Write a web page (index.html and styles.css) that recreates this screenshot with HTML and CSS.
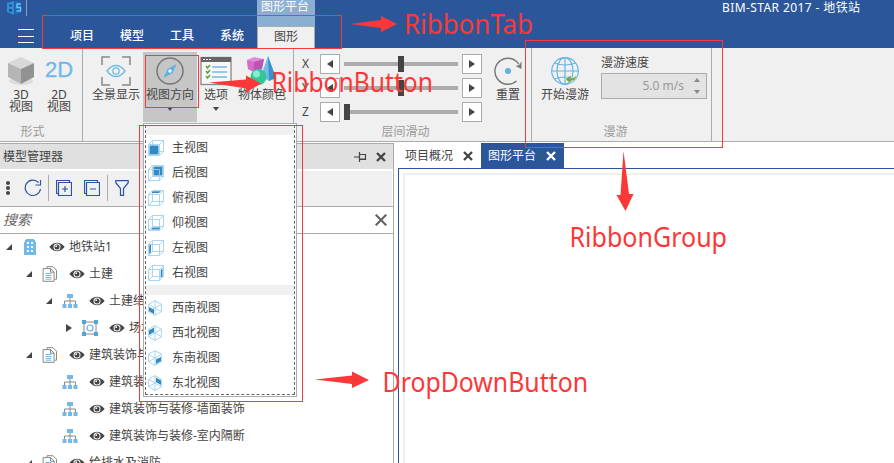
FILE: index.html
```
<!DOCTYPE html>
<html lang="zh-CN">
<head>
<meta charset="utf-8">
<title>BIM-STAR 2017</title>
<link rel="stylesheet" href="styles.css">
</head>
<body>
<svg class="defs" width="0" height="0">
  <defs>
    <symbol id="eye" viewBox="0 0 16 10"><path d="M.3 5Q4 .8 8 .8T15.700 5Q12 9.200 8 9.200T.3 5Z" fill="#444"/><circle cx="8" cy="5" r="3.500" fill="#fff"/><circle cx="8" cy="5" r="2.500" fill="#444"/><circle cx="7.200" cy="4.200" r=".9" fill="#fff"/></symbol>
    <symbol id="org" viewBox="0 0 16 14"><path d="M8 4v6M2.500 10V7h11v3" fill="none" stroke="#888"/><path d="M5 0h6v4H5zM.5 10h4v4h-4zM6 10h4v4H6zM11.500 10h4v4h-4z" fill="#74b9e6"/></symbol>
    <symbol id="docs" viewBox="0 0 15 16"><path d="M4.500 2.500V.7h6l3.500 3.500v9h-2" fill="none" stroke="#888"/><path d="M.6 2.600h7.500l3.500 3.500v9.200H.6zM8 2.600v3.600h3.600" fill="#fff" stroke="#888"/><path d="M3 7.500h6M3 9.500h6M3 11.500h6M3 13.200h6" stroke="#74b9e6"/></symbol>
    <symbol id="cube" viewBox="0 0 16 16"><path d="M.5 4.500h11v11H.5zM4.500.5h11v11h-11zM.5 4.500l4-4M11.500 4.500l4-4M.5 15.500l4-4M11.500 15.500l4-4" fill="none" stroke="#a9d6f0"/></symbol>
    <symbol id="iso" viewBox="0 0 14 16"><path d="M7 .6l6.400 3.700v7.400L7 15.400.6 11.700V4.300zM7 .6v14.800M.6 4.300l12.800 7.400M13.400 4.300L.6 11.700" fill="none" stroke="#a9d6f0"/></symbol>
    <symbol id="close" viewBox="0 0 10 10"><path d="M1 1l8 8M9 1L1 9" fill="none" stroke="currentColor" stroke-width="2.300"/></symbol>
  </defs>
</svg>

<div class="app">
  <header class="titlebar">
    <div class="caption">
      <svg class="logo" width="16" height="16" viewBox="0 0 16 16"><path d="M0 3l7-2v14l-7-3z" fill="#2f8fd6"/><path d="M8 1l6 1v11l-6 2z" fill="#1b6fb8"/><path d="M2 4.500h3v2H2zM2 9h3v2.500H2z" fill="#1c4f94"/><path d="M14 4h-4v3.500h3.500V11H9.500" fill="none" stroke="#6cc0f2" stroke-width="1.500"/></svg>
      <span class="caption-line"></span>
      <span class="context">图形平台</span>
      <span class="title">BIM-STAR 2017 - 地铁站</span>
    </div>
    <nav class="tabs">
      <span class="menu"><i></i><i></i><i></i></span>
      <span class="tab">项目</span><span class="tab">模型</span><span class="tab">工具</span><span class="tab">系统</span>
      <span class="tab active">图形</span>
    </nav>
  </header>

  <section class="ribbon">
    <div class="group g-form">
      <div class="body">
        <button class="big"><svg width="30" height="30" viewBox="0 0 30 30"><ellipse cx="15" cy="25" rx="12" ry="4" fill="#ddd"/><path d="M15 1l13 6-13 6L2 7z" fill="#d8d8d8"/><path d="M2 7l13 6v15L2 21z" fill="#b5b5b5"/><path d="M28 7l-13 6v15l13-7z" fill="#929292"/></svg><span>3D<br>视图</span></button>
        <button class="big"><b class="two-d">2D</b><span>2D<br>视图</span></button>
      </div>
      <div class="label">形式</div>
    </div>
    <div class="group g-view">
      <div class="body">
        <button class="big w-pan"><svg width="30" height="30" viewBox="0 0 30 30" fill="none"><path d="M1 9V1h8M21 1h8v8M29 21v8h-8M9 29H1v-8" stroke="#888" stroke-width="1.500"/><path d="M6 15Q10 9.500 15 9.500T24 15Q20 20.500 15 20.500T6 15Z" stroke="#74b9e6" stroke-width="1.300"/><circle cx="15" cy="15" r="3.200" stroke="#74b9e6" stroke-width="1.300"/></svg><span>全景显示</span></button>
        <button class="big pressed"><svg width="30" height="30" viewBox="0 0 30 30"><circle cx="15" cy="15" r="13" fill="none" stroke="#777" stroke-width="1.500"/><path d="M21.500 8l-4 9-9 5 4-9z" fill="#5fb0e3"/><circle cx="15" cy="15" r="1.700" fill="#fff"/></svg><span>视图方向</span><i class="drop"></i></button>
        <button class="big w-opt"><svg width="32" height="30" viewBox="0 0 32 30"><rect x="1" y="1.500" width="30" height="27" fill="#f7f7f7" stroke="#888" stroke-width="1.300"/><path d="M1 1h30v5H1z" fill="#666"/><path d="M3 3.500h2M6 3.500h2M9 3.500h2" stroke="#eee"/><path d="M12 11h15M12 16h15M12 21h15" stroke="#74b9e6" stroke-width="1.300"/><path d="M6 10l1.500 2L10 9M6 15l1.500 2 2.500-3M6 20l1.500 2 2.500-3" fill="none" stroke="#5aa344" stroke-width="1.500"/></svg><span>选项</span><i class="drop"></i></button>
        <button class="big w-col"><svg width="30" height="30" viewBox="0 0 30 30"><path d="M21 0l8 22-7 3-8-5z" fill="#70bcea"/><path d="M21 0l8 22-7 3z" fill="#3993c9"/><path d="M0 4l7-3 10 2-2 10-8 3-6-3z" fill="#e08bd8"/><path d="M0 4l7 2v10l-6-3z" fill="#d46cc9"/><path d="M7 6l10-3-2 10-8 3z" fill="#bb55b4"/><circle cx="11.500" cy="21" r="8" fill="#34c696"/><circle cx="9.500" cy="18" r="3.500" fill="#8cebca"/></svg><span>物体颜色</span></button>
      </div>
    </div>
    <div class="group g-slide">
      <div class="body">
        <div class="sliders">
          <span>X</span><button class="step"><i class="left"></i></button><div class="track"><i class="thumb mid"></i></div><button class="step"><i class="right"></i></button>
          <span>Y</span><button class="step"><i class="left"></i></button><div class="track"><i class="thumb mid"></i></div><button class="step"><i class="right"></i></button>
          <span>Z</span><button class="step"><i class="left"></i></button><div class="track"><i class="thumb"></i></div><button class="step"><i class="right"></i></button>
        </div>
        <button class="big w-reset"><svg width="30" height="30" viewBox="0 0 30 30"><path d="M23.500 25A13 13 0 1 1 26 8.500" fill="none" stroke="#777" stroke-width="1.400"/><path d="M28.500 5v8l-6-3 4-1z" fill="#777"/><circle cx="15" cy="15" r="3" fill="#5fb0e3"/></svg><span>重置</span></button>
      </div>
      <div class="label">层间滑动</div>
    </div>
    <div class="group g-roam">
      <div class="body">
        <button class="big w-roam"><svg width="30" height="30" viewBox="0 0 30 30"><g fill="none" stroke="#64b4e6" stroke-width="1.200"><circle cx="15" cy="15" r="13.300"/><ellipse cx="15" cy="15" rx="8" ry="13.300"/><path d="M15 1.700v26.600M1.700 15h26.600M4.500 7Q15 11 25.500 7M4.500 23Q15 19 25.500 23"/></g><path d="M26 19q1 6-5 6v3l-6-5 6-4v3q4 0 5-3z" fill="#6da84e" stroke="#f0f0f0" stroke-width=".6"/></svg><span>开始漫游</span></button>
        <div class="speed"><span>漫游速度</span><div class="spin"><span>5.0 m/s</span><span class="arrows"><i class="up"></i><i class="down"></i></span></div></div>
      </div>
      <div class="label">漫游</div>
    </div>
  </section>

  <main class="work">
    <aside class="panel">
      <div class="panel-head"><span>模型管理器</span><svg width="13" height="10" viewBox="0 0 13 10" fill="none" stroke="#444"><path d="M0 5h5M5.500 0v10M5 2.500h6.500v5H5M5 7h7" stroke-width="1.200"/></svg><svg class="x" width="10" height="10"><use href="#close"/></svg></div>
      <div class="tools">
        <span class="dots"><i></i><i></i><i></i></span>
        <svg class="refresh" width="18" height="18" viewBox="0 0 18 18" fill="none" stroke="#2b579a" stroke-width="1.200"><path d="M16.500 10A7.700 7.700 0 1 1 14.500 3.500M16.500 1v5h-5"/></svg>
        <i class="rule"></i>
        <svg class="expand" width="16" height="16" viewBox="0 0 16 16" fill="none" stroke="#2b579a"><path d="M2.500 2.500h13v13h-13zM2.500 13.500h-2V.5h13v2M6 9h6M9 6v6" stroke-width="1.200"/></svg>
        <svg class="collapse" width="16" height="16" viewBox="0 0 16 16" fill="none" stroke="#2b579a"><path d="M2.500 2.500h13v13h-13zM2.500 13.500h-2V.5h13v2M6 9h6" stroke-width="1.200"/></svg>
        <i class="rule second"></i>
        <svg class="filter" width="14" height="16" viewBox="0 0 14 16" fill="none" stroke="#2b579a"><path d="M.8.700h12.400v2L8.500 8.500v6.800h-3V8.500L.8 2.700z" stroke-width="1.200"/></svg>
      </div>
      <div class="search"><span>搜索</span><svg width="12" height="12" viewBox="0 0 12 12"><path d="M.7.700l10.600 10.600M11.300.7L.7 11.300" stroke="#666" stroke-width="2.200"/></svg></div>
      <div class="tree">
        <div class="row"><i class="twist open"></i><svg class="ico" width="14" height="16" viewBox="0 0 14 16"><path d="M3 0h8v1h1v2h1v13H1V3h1V1h1z" fill="#74b9e6"/><path d="M4 3h2v2H4zM8 3h2v2H8zM4 7h2v2H4zM8 7h2v2H8zM4 11h2v2H4zM8 11h2v2H8z" fill="#fff"/></svg><svg class="eye"><use href="#eye"/></svg><span>地铁站1</span></div>
        <div class="row l1"><i class="twist open"></i><svg class="ico" width="15" height="16"><use href="#docs"/></svg><svg class="eye"><use href="#eye"/></svg><span>土建</span></div>
        <div class="row l2"><i class="twist open"></i><svg class="ico" width="16" height="14"><use href="#org"/></svg><svg class="eye"><use href="#eye"/></svg><span>土建结</span></div>
        <div class="row l3"><i class="twist shut"></i><svg class="ico" width="16" height="16" viewBox="0 0 16 16"><path d="M2 2h12v12H2z" fill="none" stroke="#888"/><circle cx="8" cy="8" r="3" fill="none" stroke="#64b4e6" stroke-width="1.200"/><path d="M0 0h4v4H0zM12 0h4v4h-4zM0 12h4v4H0zM12 12h4v4h-4z" fill="#4fa5da"/></svg><svg class="eye"><use href="#eye"/></svg><span>场地</span></div>
        <div class="row l1"><i class="twist open"></i><svg class="ico" width="15" height="16"><use href="#docs"/></svg><svg class="eye"><use href="#eye"/></svg><span>建筑装饰与</span></div>
        <div class="row l2"><i class="twist"></i><svg class="ico" width="16" height="14"><use href="#org"/></svg><svg class="eye"><use href="#eye"/></svg><span>建筑装</span></div>
        <div class="row l2"><i class="twist"></i><svg class="ico" width="16" height="14"><use href="#org"/></svg><svg class="eye"><use href="#eye"/></svg><span>建筑装饰与装修-墙面装饰</span></div>
        <div class="row l2"><i class="twist"></i><svg class="ico" width="16" height="14"><use href="#org"/></svg><svg class="eye"><use href="#eye"/></svg><span>建筑装饰与装修-室内隔断</span></div>
        <div class="row l1"><i class="twist open"></i><svg class="ico" width="15" height="16"><use href="#docs"/></svg><svg class="eye"><use href="#eye"/></svg><span>给排水及消防</span></div>
      </div>
    </aside>
    <section class="documents">
      <div class="doc-tabs"><span class="doc">项目概况<svg width="10" height="10"><use href="#close"/></svg></span><span class="doc current">图形平台<svg width="10" height="10"><use href="#close"/></svg></span></div>
      <div class="canvas"><div class="viewport"></div></div>
    </section>
  </main>
</div>

<div class="dropdown">
  <div class="dropdown-inner">
    <div class="band"></div>
    <div class="item"><svg width="16" height="16"><use href="#cube"/><path d="M1.500 5.500h9v9h-9z" fill="#3389c4"/></svg>主视图</div>
    <div class="item"><svg width="16" height="16"><use href="#cube"/><path d="M5.500 1.500h9v9h-9z" fill="#3389c4"/><path d="M5 4.500h6.500V11" fill="none" stroke="#8dc5e8"/></svg>后视图</div>
    <div class="item"><svg width="16" height="16"><use href="#cube"/><path d="M5 1.200h8L11 3H3.500z" fill="#3389c4"/></svg>俯视图</div>
    <div class="item"><svg width="16" height="16"><use href="#cube"/><path d="M4.500 12.500h8L11 14.500H3z" fill="#3389c4"/></svg>仰视图</div>
    <div class="item"><svg width="16" height="16"><use href="#cube"/><path d="M1.200 5.500L3 4v8l-1.800 2z" fill="#3389c4"/></svg>左视图</div>
    <div class="item"><svg width="16" height="16"><use href="#cube"/><path d="M12.700 5L14.500 3v8l-1.800 2z" fill="#3389c4"/></svg>右视图</div>
    <div class="band"></div>
    <div class="item"><svg width="14" height="16"><use href="#iso"/><path d="M1 7l5 2.500V14L1 11z" fill="#3389c4"/></svg>西南视图</div>
    <div class="item"><svg width="14" height="16"><use href="#iso"/><path d="M1 5.500L6 2.500v4.500L1 10z" fill="#3389c4"/></svg>西北视图</div>
    <div class="item"><svg width="14" height="16"><use href="#iso"/><path d="M8 9.500L13 7v4l-5 3z" fill="#3389c4"/></svg>东南视图</div>
    <div class="item"><svg width="14" height="16"><use href="#iso"/><path d="M8 2.500l5 3V10L8 7z" fill="#3389c4"/></svg>东北视图</div>
  </div>
</div>

<svg class="notes" width="894" height="463" viewBox="0 0 894 463">
  <g fill="none" stroke="#fb3838">
    <rect x="42.500" y="15.500" width="299" height="33"/>
    <rect x="145.500" y="55.500" width="53" height="52"/>
    <rect x="139.500" y="125.500" width="163" height="276"/>
    <rect x="525.500" y="40.500" width="197" height="107"/>
  </g>
  <g fill="#fb3838">
    <path d="M350 24l31-4v-4l16 8-16 8v-4z"/>
    <path d="M209 82.500l37-3v-4l15 8-15 9v-4z"/>
    <path d="M315 379.500l37-4v-4l17 8.500-17 8v-4z"/>
    <path d="M623.500 151l-3 44h-4l9 16 8-17h-4.500z"/>
    <text x="404" y="34" textLength="129" lengthAdjust="spacingAndGlyphs">RibbonTab</text>
    <text x="271.500" y="92" textLength="161.500" lengthAdjust="spacingAndGlyphs">RibbonButton</text>
    <text x="569.500" y="247" textLength="157.500" lengthAdjust="spacingAndGlyphs">RibbonGroup</text>
    <text x="382.500" y="392" textLength="205.500" lengthAdjust="spacingAndGlyphs">DropDownButton</text>
  </g>
</svg>
</body>
</html>
```
FILE: styles.css
```
* { box-sizing: border-box; }
body { margin: 0; width: 894px; height: 463px; overflow: hidden; position: relative; background: #fff; color: #444; font: 12px/16px "Noto Sans", "Noto Sans CJK SC", sans-serif; }
button { margin: 0; padding: 0; border: 0; background: none; color: inherit; font: inherit; }
svg { display: block; flex: none; }
i { display: block; flex: none; }
span { white-space: nowrap; }
.defs { display: none; }
.app { height: 463px; display: flex; flex-direction: column; overflow: hidden; }

.titlebar { height: 48px; background: #2b579a; color: #fff; flex: none; }
.caption { height: 26px; display: flex; align-items: flex-start; }
.logo { margin-left: 7px; }
.caption-line { width: 1px; height: 16px; margin-left: 3px; background: #8c9fbe; }
.context { width: 58px; height: 26px; margin-left: 230px; padding-left: 4px; background: #8baed3; line-height: 14px; }
.title { margin-left: 407px; letter-spacing: .4px; }
.tabs { height: 22px; display: flex; }
.menu { width: 16px; height: 14px; margin: 3px 27px 0 18px; display: flex; flex-direction: column; justify-content: space-between; }
.menu i { height: 1px; background: #fff; }
.tab { width: 50px; padding-left: 9px; line-height: 20px; font-weight: 500; }
.tab.active { width: 58px; margin-left: -4px; padding-left: 16px; background: #f0f0f0; color: #444; border: 1px solid #ababab; border-bottom: 0; font-weight: 400; }

.ribbon { height: 94px; display: flex; background: #f0f0f0; border-bottom: 1px solid #ababab; flex: none; }
.group { height: 93px; display: flex; flex-direction: column; border-right: 1px solid #ababab; flex: none; }
.body { height: 76px; display: flex; }
.label { text-align: center; color: #999; line-height: 15px; }
.g-form { width: 83px; }
.g-form .body { padding-left: 2px; }
.g-form .label { padding-right: 17px; }
.g-view { width: 211px; }
.g-slide { width: 238px; }
.g-slide .label { padding-right: 14px; }
.g-roam { width: 180px; }
.g-roam .label { padding-right: 12px; }
.big { width: 38px; height: 70px; margin-top: 4px; padding-top: 4px; display: flex; flex-direction: column; align-items: center; flex: none; }
.big span { margin-top: 1px; }
.g-form .big span { line-height: 12px; margin-top: 3px; }
.two-d { height: 30px; color: #74b9e6; font: 22px/28px "Liberation Sans", sans-serif; -webkit-text-stroke: .4px #74b9e6; }
.w-pan { width: 54px; margin: 4px 0 0 6px; }
.pressed { width: 54px; background: #c6c6c6; }
.w-opt { width: 36px; margin-left: 1px; }
.w-col { width: 54px; margin-left: 1px; }
.drop { margin-top: 4px; border: 3px solid transparent; border-top: 4px solid #444; border-bottom: 0; }
.sliders { width: 180px; height: 68px; margin: 6px 0 0 8px; display: grid; grid-template: repeat(3, 20px) / 18px 24px 114px 24px; row-gap: 4px; align-items: center; }
.sliders > span { line-height: 20px; }
.step { width: 20px; height: 20px; background: #fff; border: 1px solid #ababab; display: flex; align-items: center; justify-content: center; }
.left { border: 4px solid transparent; border-right: 6px solid #444; border-left: 0; }
.right { border: 4px solid transparent; border-left: 6px solid #444; border-right: 0; }
.track { height: 4px; background: #ababab; display: flex; align-items: center; }
.track + .step { justify-self: end; }
.thumb { width: 6px; height: 16px; background: #444; }
.thumb.mid { margin-left: 54px; }
.w-reset { width: 36px; margin-left: 8px; }
.w-roam { width: 54px; margin-left: 6px; }
.speed { margin: 6px 0 0 9px; }
.speed > span { display: block; line-height: 17px; }
.spin { width: 106px; height: 26px; margin-top: 2px; border: 1px solid #ababab; background: #e3e3e3; color: #999; display: flex; align-items: center; justify-content: flex-end; }
.arrows { width: 12px; margin: 0 0 0 10px; display: flex; flex-direction: column; gap: 8px; }
.up, .down { width: 6px; border: 3px solid transparent; }
.up { border-top: 0; border-bottom: 4px solid #888; }
.down { border-bottom: 0; border-top: 4px solid #888; }

.work { flex: 1; min-height: 0; display: flex; padding-top: 1px; }
.panel { width: 394px; border: solid #ababab; border-width: 1px 1px 0 0; flex: none; }
.panel-head { height: 25px; padding: 0 7px 0 3px; display: flex; align-items: center; background: #e0e0e0; }
.panel-head > span { flex: 1; }
.panel-head .x { margin-left: 9px; }
.tools { height: 35px; margin: 2px 1px 0 0; padding-bottom: 2px; background: #f0f0f0; display: flex; align-items: center; }
.dots { width: 4px; margin-left: 6px; display: flex; flex-direction: column; gap: 1px; }
.dots i { width: 4px; height: 4px; border-radius: 2px; background: #444; }
.refresh { margin-left: 14px; }
.rule { width: 1px; height: 26px; margin-left: 6px; background: #ababab; }
.expand { margin-left: 7px; }
.collapse { margin-left: 12px; }
.rule.second { margin-left: 7px; }
.filter { margin-left: 7px; }
.search { height: 28px; padding: 0 6px 0 3px; border: solid #ababab; border-width: 1px 0; display: flex; align-items: center; justify-content: space-between; font-size: 14px; font-style: italic; color: #666; }
.tree { margin-top: -1px; }
.row { height: 27px; display: flex; align-items: center; padding-left: 6px; }
.l1 { padding-left: 26px; }
.l2 { padding-left: 46px; }
.l3 { padding-left: 66px; }
.twist { width: 6px; margin-right: 10px; }
.open { border-left: 6px solid transparent; border-bottom: 6px solid #444; }
.shut { border: 4px solid transparent; border-left: 6px solid #444; border-right: 0; }
.ico { width: 16px; }
.eye { width: 16px; height: 10px; margin: 0 4px 0 11px; }

.documents { width: 496px; margin-left: 4px; display: flex; flex-direction: column; flex: none; }
.doc-tabs { height: 25px; display: flex; }
.doc { display: flex; align-items: center; gap: 10px; padding: 0 8px 0 7px; }
.current { background: #2b579a; color: #fff; }
.canvas { flex: 1; padding: 4px 0 0 4px; border: solid #2b579a; border-width: 1px 0 0 1px; }
.viewport { height: 100%; border: solid #f0f0f0; border-width: 2px 0 0 2px; }

.dropdown { position: absolute; left: 143px; top: 123px; width: 154px; height: 274px; padding: 1px; background: #fff; border: 1px solid #ababab; }
.dropdown-inner { height: 270px; border: 1px dashed #666; }
.band { height: 10px; background: #f0f0f0; }
.dropdown-inner > .band:first-child { height: 9px; }
.item { height: 25px; display: flex; align-items: center; padding-left: 2px; }
.item svg { margin-right: 8px; }
.item svg[width="14"] { margin-right: 10px; }
.notes { position: absolute; left: 0; top: 0; font: 28px "Noto Sans", sans-serif; }
```
